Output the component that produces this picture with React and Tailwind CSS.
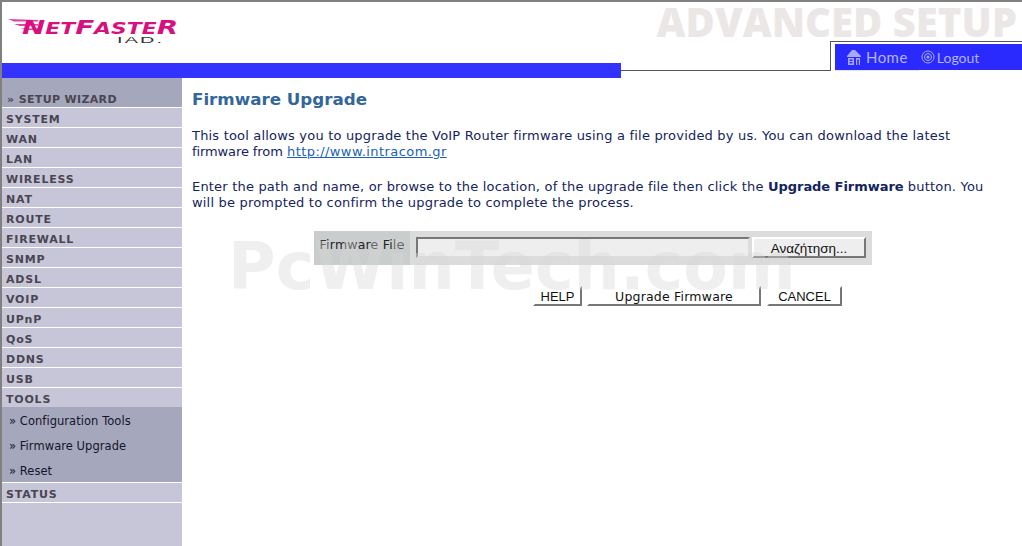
import React from "react";

const menuTop = ["WAN", "LAN", "WIRELESS", "NAT", "ROUTE", "FIREWALL", "SNMP", "ADSL", "VOIP", "UPnP", "QoS", "DDNS", "USB", "TOOLS"];
const subItems = ["Configuration Tools", "Firmware Upgrade", "Reset"];

function MenuItem({ label }) {
  return (
    <div className="h-5 border-b border-white pl-1 pt-[5px] text-[11px] leading-[14px] font-bold tracking-[0.8px] text-[#4a4550]">
      {label}
    </div>
  );
}

function Logo() {
  return (
    <div className="relative ml-[6px] mt-[15px] h-[30px] w-[172px]">
      <svg className="absolute left-0 top-[1px]" width="44" height="16" viewBox="0 0 44 16">
        <path d="M0 1 L30 2 L30 3.500 L6 3.500 Z M6 6 L30 6 L30 7.500 L12 8 Z M12 10.500 L30 10.500 L30 12 L19 12 Z" fill="#e0409a" />
      </svg>
      <div className="absolute left-[14px] top-0 flex origin-left scale-x-[1.46] items-baseline whitespace-nowrap font-['DejaVu_Sans',sans-serif] leading-[20px] font-bold text-[#d8107f] italic">
        <span className="text-[19px]">N</span>
        <span className="text-[15px]">ET</span>
        <span className="text-[19px]">F</span>
        <span className="text-[15px]">ASTE</span>
        <span className="text-[19px]">R</span>
      </div>
      <div className="absolute left-[109px] top-[18px] origin-left scale-x-[2.2] font-['Liberation_Sans',sans-serif] text-[9px] leading-[10px] tracking-[1px] text-[#333]">
        IAD.
      </div>
    </div>
  );
}

function HomeIcon() {
  return (
    <svg width="16" height="16" viewBox="0 0 16 16" fill="#a9a9ff">
      <path d="M1 7 L6 1 H9 L15 7 V8 H1 Z" />
      <path d="M2 9 H8 V16 H2 Z M3.500 10.500 V12 H6.500 V10.500 Z M3.500 13 V14.500 H6.500 V13 Z" fillRule="evenodd" />
      <path d="M10 9 H14 V16 H12.800 V10.500 H11.200 V16 H10 Z" />
    </svg>
  );
}

function LogoutIcon() {
  return (
    <svg width="14" height="14" viewBox="0 0 14 14" fill="none" stroke="#a9a9ff">
      <circle cx="7" cy="7" r="6" />
      <circle cx="7" cy="7" r="3.500" />
      <circle cx="7" cy="7" r="1.500" fill="#a9a9ff" stroke="none" />
    </svg>
  );
}

function Button({ className, children }) {
  return (
    <button className={`h-[20px] border-2 border-t-white border-l-white border-r-[#777] border-b-[#777] bg-white text-center leading-[15px] text-[#111] ${className}`}>
      {children}
    </button>
  );
}

export default function App() {
  return (
    <div className="relative h-[546px] w-[1022px] overflow-hidden border-l-2 border-t-2 border-[#808080] bg-white font-['DejaVu_Sans',sans-serif]">
      {/* Header */}
      <div className="relative flex h-[76px]">
        <div className="flex w-[619px] flex-col justify-between">
          <Logo />
          <div className="h-[15px] bg-[#3333ff]" />
        </div>
        <div className="flex min-w-0 flex-1 flex-col">
          <div className="flex h-[39px] justify-end pr-[5px] font-['Open_Sans',sans-serif] text-[40px] leading-[40px] font-extrabold whitespace-nowrap text-[#ece7e7]">
            ADVANCED SETUP
          </div>
          <div className="flex h-[30px] flex-1">
            <div className="mb-[7px] h-[30px] w-[209px] border-b border-[#555]" />
            <div className="h-[30px] flex-1 border-l border-t border-[#555] pl-[4px] pt-[2px]">
              <div className="flex h-[26px] items-center bg-[#2a2aff] pl-[11px] font-['Lato',sans-serif] text-[15px] text-[#b4b4ff]">
                <HomeIcon />
                <span className="ml-[4px] text-[15px] tracking-[0.45px]">Home</span>
                <span className="ml-[13px]"><LogoutIcon /></span>
                <span className="ml-[2px] text-[14px]">Logout</span>
              </div>
              <div className="h-px w-[84px] bg-[#e8e4e4]" />
            </div>
          </div>
        </div>
      </div>

      <div className="flex h-[468px]">
        {/* Sidebar */}
        <div className="w-[180px] bg-[#c6c6d8]">
          <div className="h-[30px] border-b border-white bg-[#a5a7bd] pl-[5px] pt-[15px] text-[11px] leading-[14px] font-bold tracking-[0.35px] text-[#4a4550]">
            » SETUP WIZARD
          </div>
          <MenuItem label="SYSTEM" />
          {menuTop.map((label) => (
            <MenuItem key={label} label={label} />
          ))}
          <div className="-mt-px flex h-[76px] flex-col border-b border-white bg-[#a5a7bd] pl-[7px] pt-[2px] text-[11.500px] tracking-[0.05px] text-[#15152a]">
            {subItems.map((label) => (
              <div key={label} className="flex h-[25px] shrink-0 items-center">» {label}</div>
            ))}
          </div>
          <MenuItem label="STATUS" />
        </div>

        {/* Content */}
        <div className="flex-1 pl-[10px] pr-[30px] text-[13px] leading-[16px] text-[#14245c]">
          <h1 className="mt-[11px] text-[16.700px] leading-[20px] font-bold text-[#336699]">Firmware Upgrade</h1>
          <p className="mt-[19px] tracking-[0.19px]">
            This tool allows you to upgrade the VoIP Router firmware using a file provided by us. You can download the latest <span className="tracking-[-0.1px]">firmware from</span>{" "}
            <a href="#" className="tracking-[0.42px] text-[#1a5fb4] underline">http://www.intracom.gr</a>
          </p>
          <p className="mt-[19px] tracking-[0.19px]">
            Enter the path and name, or browse to the location, of the upgrade file then click the <b className="tracking-[-0.05px]">Upgrade Firmware</b> button. You will be prompted to confirm the upgrade to complete the process.
          </p>

          <div className="ml-[122px] mt-[20px] flex h-[34px] w-[558px] bg-[#dcdcdc]">
            <div className="flex w-[96px] items-center justify-center bg-[#c9cdcd] pb-[6px] text-[12.500px] tracking-[0.2px] text-[#222]">Firmware File</div>
            <div className="ml-[1px] flex flex-1 items-start pl-[5px] pt-[6px]">
              <div className="h-[21px] w-[334px] border-2 border-t-[#777] border-l-[#777] border-r-[#ddd] border-b-[#ddd] bg-[#eeeeee]" />
              <button className="ml-[2px] h-[21px] w-[114px] border-2 border-t-white border-l-white border-r-[#777] border-b-[#777] bg-[#eeeeee] pt-[1px] font-['Liberation_Sans',sans-serif] text-[13.500px] leading-[15px] text-[#111]">
                Αναζήτηση...
              </button>
            </div>
          </div>

          <div className="ml-[341px] mt-[21px] flex">
            <Button className="w-[49px] font-['Liberation_Sans',sans-serif] text-[13px]">HELP</Button>
            <Button className="ml-[5px] w-[174px] text-[12.500px] tracking-[0.2px]">Upgrade Firmware</Button>
            <Button className="ml-[6px] w-[75px] font-['Liberation_Sans',sans-serif] text-[13px]">CANCEL</Button>
          </div>
        </div>
      </div>

      {/* Watermark */}
      <div className="pointer-events-none absolute left-[226px] top-[227px] text-[65px] leading-[76px] font-bold tracking-[0.1px] whitespace-nowrap text-[#d8d8d8] opacity-40">
        PcWinTech.com
      </div>
    </div>
  );
}
